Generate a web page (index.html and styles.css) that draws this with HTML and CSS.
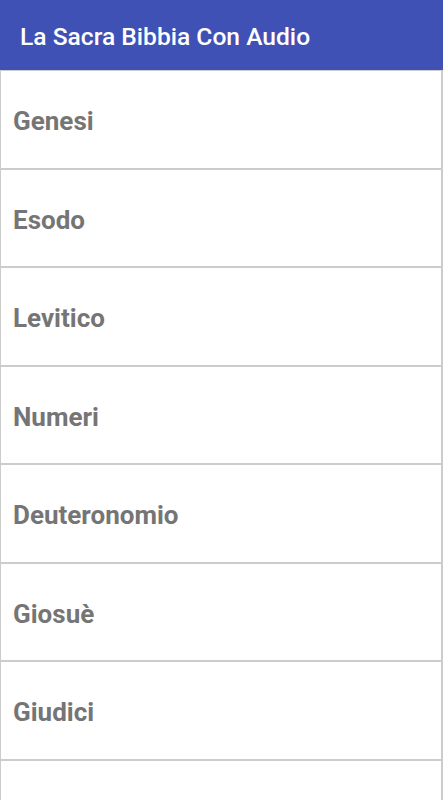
FILE: index.html
```html
<html>
  <head>
    <link rel="stylesheet" href="styles.css">
  </head>
  <body>
    <header class="toolbar">
      <span class="title">La Sacra Bibbia Con Audio</span>
    </header>
    <div class="book-list">
      <div class="book">Genesi</div>
      <div class="book">Esodo</div>
      <div class="book">Levitico</div>
      <div class="book">Numeri</div>
      <div class="book">Deuteronomio</div>
      <div class="book">Giosuè</div>
      <div class="book">Giudici</div>
      <div class="book"></div>
    </div>
  </body>
</html>
```
FILE: styles.css
```css
body {
  margin: 0;
  font-family: Roboto, "Liberation Sans", sans-serif;
  background: #ffffff;
  overflow: hidden;
}
.toolbar {
  height: 70px;
  background: #3f51b5;
  display: flex;
  align-items: center;
  padding: 3px 0 0 20px;
  box-sizing: border-box;
}
.title {
  color: #ffffff;
  font-size: 24.6px;
  font-weight: 500;
}
.book-list {
  display: flex;
  flex-direction: column;
}
.book {
  height: 98.5px;
  box-sizing: border-box;
  border: 1px solid #cccccc;
  border-right-width: 2px;
  display: flex;
  align-items: center;
  padding: 4px 0 0 12px;
  font-size: 26px;
  font-weight: bold;
  color: #757575;
  white-space: nowrap;
}
```
